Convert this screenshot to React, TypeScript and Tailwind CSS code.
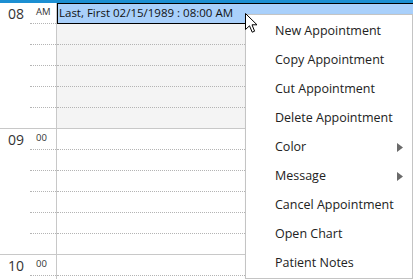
import React from "react";

const hours = [
  { h: "08", m: "AM", shaded: true },
  { h: "09", m: "00", shaded: false },
  { h: "10", m: "00", shaded: false },
];

const items: { label: string; sub?: boolean }[] = [
  { label: "New Appointment" },
  { label: "Copy Appointment" },
  { label: "Cut Appointment" },
  { label: "Delete Appointment" },
  { label: "Color", sub: true },
  { label: "Message", sub: true },
  { label: "Cancel Appointment" },
  { label: "Open Chart" },
  { label: "Patient Notes" },
];

function Hour({ h, m, shaded }: { h: string; m: string; shaded: boolean }) {
  return (
    <div className="flex border-b border-[#c8c8c8]">
      <div className="w-[56px] shrink-0 flex flex-col">
        <div className="h-[21px] flex">
          <div className="w-[30px] pl-[8px] pt-[1px] text-[14px] leading-[19px] text-[#333]">{h}</div>
          <div className="flex-1 border-b border-dotted border-[#b4b4b4] pl-[6px] pt-[3px] text-[9.5px] leading-[12px] text-[#333]">
            {m}
          </div>
        </div>
        {[0, 1, 2, 3].map((i) => (
          <div key={i} className="h-[21px] ml-[30px] border-b border-dotted border-[#b4b4b4]" />
        ))}
        <div className="h-[20px]" />
      </div>
      <div className={`flex-1 flex flex-col border-l border-[#c8c8c8] ${shaded ? "bg-[#f4f4f4]" : "bg-white"}`}>
        {[0, 1, 2, 3, 4].map((i) => (
          <div key={i} className="h-[21px] border-b border-dotted border-[#b4b4b4]" />
        ))}
        <div className="h-[20px]" />
      </div>
    </div>
  );
}

export default function App() {
  return (
    <div
      className="relative w-[413px] h-[279px] overflow-hidden bg-white"
      style={{ fontFamily: '"Open Sans", "Noto Sans", sans-serif' }}
    >
      <div className="h-[3px] bg-[#1c8fd2]" />
      {hours.map((x) => (
        <Hour key={x.h} {...x} />
      ))}

      {/* appointment */}
      <div className="absolute left-[57px] top-[3px] w-[360px] h-[21px] border border-black bg-[#a9d0fb] pl-[1px] text-[11.5px] leading-[18px] text-[#111] whitespace-nowrap">
        Last, First 02/15/1989 : 08:00 AM
      </div>

      {/* context menu */}
      <div className="absolute left-[245px] top-[14px] w-[168px] h-[265px] border border-[#c4c4c4] bg-white pt-[2px] shadow-[1px_1px_2px_rgba(0,0,0,0.15)] flex flex-col">
        {items.map((it) => (
          <div
            key={it.label}
            className="h-[29px] flex items-center pl-[29px] pr-[9px] text-[12.5px] text-[#222] whitespace-nowrap"
          >
            <span className="flex-1">{it.label}</span>
            {it.sub && (
              <svg width="6" height="9" viewBox="0 0 6 9">
                <path d="M0 0 L6 4.5 L0 9 Z" fill="#6a6a6a" />
              </svg>
            )}
          </div>
        ))}
      </div>

      {/* cursor */}
      <svg className="absolute left-[245px] top-[13px]" width="14" height="22" viewBox="0 0 14 22">
        <path
          d="M0.5 0.5 L0.5 16.5 L4.5 12.8 L7.2 19.2 L9.6 18.2 L7 11.8 L12 11.8 Z"
          fill="white"
          stroke="black"
          strokeWidth="1"
          strokeLinejoin="miter"
        />
      </svg>
    </div>
  );
}
